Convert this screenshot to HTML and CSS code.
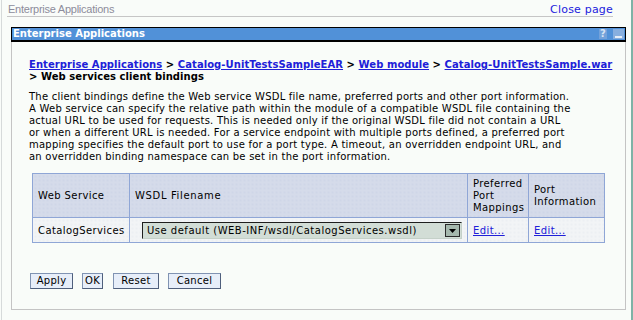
FILE: index.html
```html
<!DOCTYPE html>
<html>
<head>
<meta charset="utf-8">
<link rel="stylesheet" href="styles.css">
</head>
<body>
<div class="frame">
  <div class="pagehead">
    <span class="pagetitle">Enterprise Applications</span>
    <a class="close" href="#">Close page</a>
  </div>
  <div class="panel">
    <div class="bar">
      <span class="bar-title">Enterprise Applications</span>
      <span class="bar-icons">
        <span class="icon-help">?</span>
        <span class="icon-min"><span class="min-line"></span></span>
      </span>
    </div>
    <div class="panel-body">
      <div class="crumbs"><a href="#">Enterprise Applications</a> &gt; <a href="#">Catalog-UnitTestsSampleEAR</a> &gt; <a href="#">Web module</a> &gt; <a href="#">Catalog-UnitTestsSample.war</a><br>&gt; Web services client bindings</div>
      <p class="desc">The client bindings define the Web service WSDL file name, preferred ports and other port information.<br>A Web service can specify the relative path within the module of a compatible WSDL file containing the<br>actual URL to be used for requests. This is needed only if the original WSDL file did not contain a URL<br>or when a different URL is needed. For a service endpoint with multiple ports defined, a preferred port<br>mapping specifies the default port to use for a port type. A timeout, an overridden endpoint URL, and<br>an overridden binding namespace can be set in the port information.</p>
      <table class="grid">
        <colgroup>
          <col class="c1"><col class="c2"><col class="c3"><col class="c4">
        </colgroup>
        <thead>
          <tr>
            <th>Web Service</th>
            <th class="th-wsdl">WSDL Filename</th>
            <th>Preferred<br>Port<br>Mappings</th>
            <th>Port<br>Information</th>
          </tr>
        </thead>
        <tbody>
          <tr>
            <td>CatalogServices</td>
            <td>
              <div class="select">
                <span class="select-text">Use default (WEB-INF/wsdl/CatalogServices.wsdl)</span>
                <span class="select-arrow"><svg width="7" height="4" viewBox="0 0 7 4"><path d="M0 0H7L3.5 4Z" fill="#000"/></svg></span>
              </div>
            </td>
            <td><a href="#">Edit...</a></td>
            <td><a href="#">Edit...</a></td>
          </tr>
        </tbody>
      </table>
      <div class="buttons">
        <button class="btn btn-apply">Apply</button>
        <button class="btn btn-ok">OK</button>
        <button class="btn btn-reset">Reset</button>
        <button class="btn btn-cancel">Cancel</button>
      </div>
    </div>
  </div>
</div>
</body>
</html>
```
FILE: styles.css
```css
html, body {
  margin: 0;
  padding: 0;
  background: #f9fcf9;
}
body {
  width: 633px;
  height: 320px;
  overflow: hidden;
  font-family: "DejaVu Sans", Verdana, sans-serif;
  font-size: 10px;
  color: #000;
}
.frame {
  margin-left: 1px;
  width: 629px;
  height: 320px;
  border-left: 1px solid #d6dada;
  border-right: 2px solid #7fb2a6;
}
.pagehead {
  margin-left: 5px;
  width: 606px;
  padding-top: 3px;
  height: 13px;
  line-height: 13px;
  display: flex;
  justify-content: space-between;
  border-bottom: 1px solid #c6c6c6;
}
.pagetitle {
  font-family: "Liberation Sans", Arial, sans-serif;
  font-size: 11px;
  letter-spacing: -0.25px;
  color: #8d8c9b;
  padding-left: 1px;
}
.close {
  font-family: "DejaVu Sans", Verdana, sans-serif;
  font-size: 11px;
  letter-spacing: 0.2px;
  color: #2222dd;
  text-decoration: none;
}
.panel {
  margin-top: 10px;
  margin-left: 9px;
  width: 615px;
}
.bar {
  height: 12px;
  border: 1px solid #000;
  border-bottom-width: 2px;
  background: #5191d8;
  display: flex;
  justify-content: space-between;
  align-items: center;
}
.bar-title {
  color: #fff;
  font-weight: bold;
  line-height: 12px;
  padding-left: 1px;
}
.bar-icons {
  display: flex;
  align-items: center;
  gap: 6px;
  padding-right: 1px;
}
.icon-help {
  width: 8px;
  height: 10px;
  background: #74a2da;
  color: #d8e4f4;
  font-weight: bold;
  font-size: 10px;
  line-height: 10px;
  text-align: center;
}
.icon-min {
  width: 11px;
  height: 10px;
  background: #88afdf;
  display: flex;
  align-items: flex-end;
  justify-content: center;
}
.min-line {
  width: 7px;
  height: 2px;
  margin-bottom: 1px;
  background: #e6eef8;
}
.panel-body {
  border: 1px solid #c4c4c4;
  border-top: 0;
  padding: 17px 8px 20px 17px;
}
.crumbs {
  font-weight: bold;
  line-height: 12px;
  letter-spacing: 0.06px;
  white-space: nowrap;
}
a {
  color: #2020d8;
}
.desc {
  margin: 8px 0 0;
  line-height: 12px;
  letter-spacing: 0.23px;
  white-space: nowrap;
}
.grid {
  margin-top: 10px;
  margin-left: 3px;
  border-collapse: collapse;
  table-layout: fixed;
  width: 572px;
}
.c1 { width: 97px; }
.c2 { width: 338px; }
.c3 { width: 61px; }
.c4 { width: 76px; }
.grid th, .grid td {
  border: 1px solid #8fa6d6;
  text-align: left;
  vertical-align: middle;
  line-height: 12px;
  font-weight: normal;
  letter-spacing: 0.4px;
  padding: 4px 5px 3px;
  white-space: nowrap;
}
.grid th.th-wsdl {
  letter-spacing: 0.65px;
}
.grid th {
  background-color: #d5dbea;
  background-image: radial-gradient(circle, #c7cfe3 0.6px, transparent 0.8px);
  background-size: 4px 4px;
}
.grid td {
  background-color: #f2f4f6;
  background-image: radial-gradient(circle, #e4e8ee 0.6px, transparent 0.8px);
  background-size: 4px 4px;
}
.select {
  margin-left: 7px;
  width: 320px;
  height: 17px;
  box-sizing: border-box;
  border: 1px solid #1e1e1e;
  border-right-color: #c4d0c8;
  border-bottom-color: #c4d0c8;
  background: #d2ddd6;
  display: flex;
  align-items: center;
  justify-content: space-between;
  letter-spacing: 0.5px;
}
.select-text {
  padding-left: 4px;
  line-height: 12px;
}
.select-arrow {
  width: 15px;
  height: 13px;
  box-sizing: border-box;
  border: 1px solid #2a2a2a;
  background: #a5b8ad;
  display: flex;
  align-items: center;
  justify-content: center;
  margin-right: 1px;
}
.buttons {
  margin-top: 30px;
  margin-left: 1px;
  display: flex;
  gap: 9px;
}
.btn {
  height: 16px;
  box-sizing: border-box;
  margin: 0;
  padding: 0;
  font-family: "DejaVu Sans", Verdana, sans-serif;
  font-size: 10px;
  line-height: 12px;
  letter-spacing: 0.3px;
  text-align: center;
  color: #000;
  background: #e7eef9;
  border: 1px solid #8093b2;
  border-right-color: #4f5f7c;
  border-bottom-color: #4f5f7c;
  border-radius: 0;
}
.btn-apply { width: 43px; }
.btn-ok { width: 21px; }
.btn-reset { width: 46px; margin-left: 1px; }
.btn-cancel { width: 53px; }
```
